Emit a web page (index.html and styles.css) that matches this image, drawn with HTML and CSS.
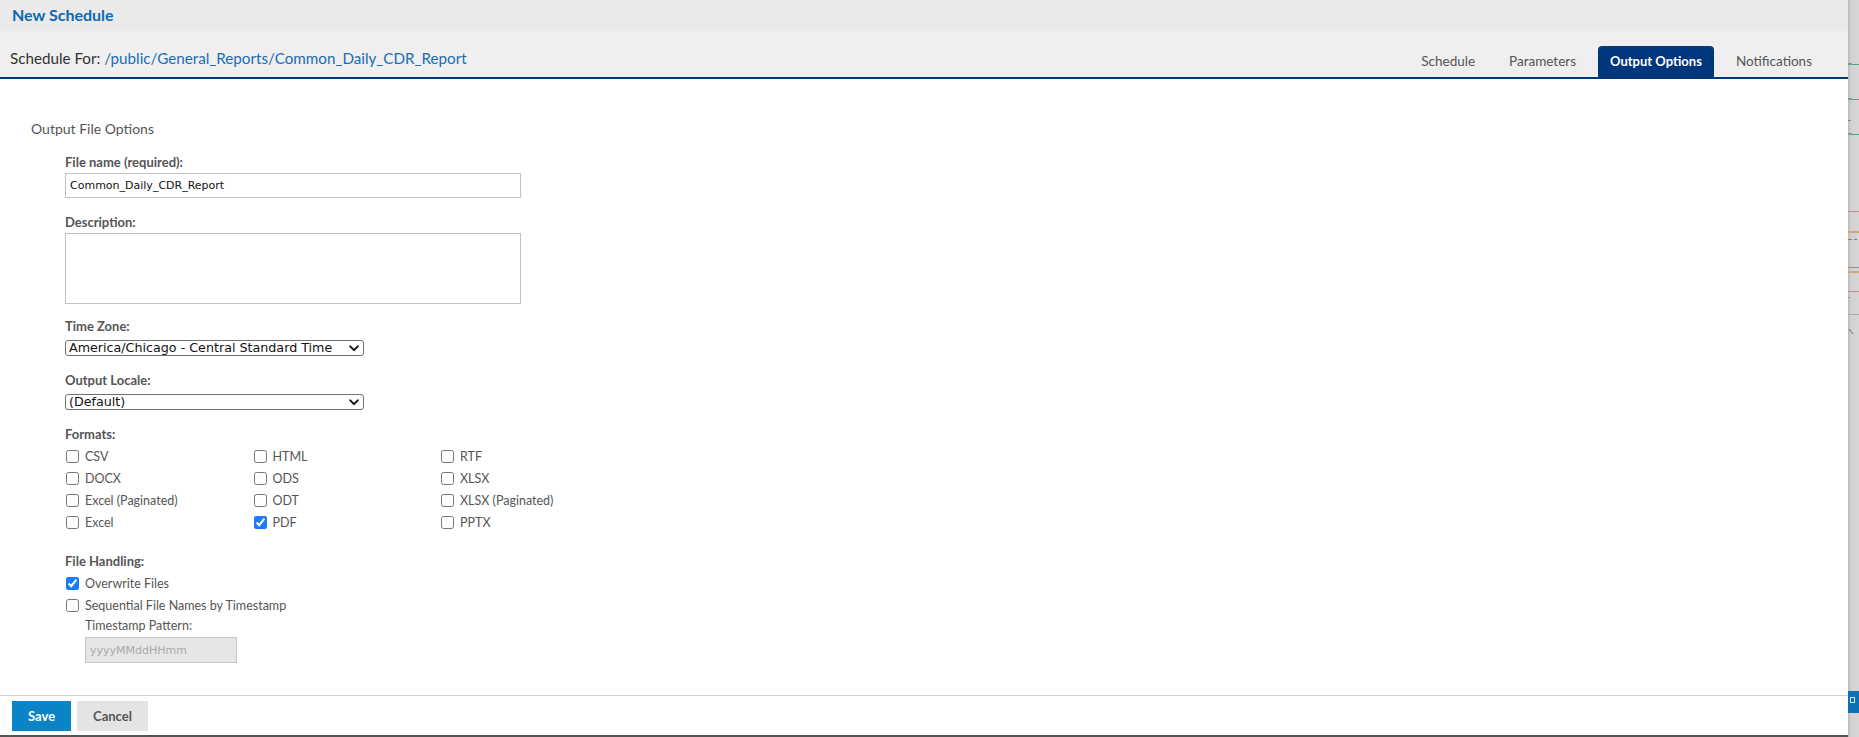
FILE: index.html
```html
<!DOCTYPE html>
<html lang="en">
<head>
  <meta charset="UTF-8">
  <title>New Schedule</title>
  <meta name="viewport" content="width=device-width, initial-scale=1.0">
  <link rel="stylesheet" href="styles.css">
</head>
<body>
  <div class="screen">
    <div class="dialog">
      <div class="title-bar">New Schedule</div>

      <div class="sub-header">
        <div class="schedule-for">Schedule For: <a class="report-path" href="#">/public/General_Reports/Common_Daily_CDR_Report</a></div>
        <ul class="tabs">
          <li class="tab">Schedule</li>
          <li class="tab">Parameters</li>
          <li class="tab active">Output Options</li>
          <li class="tab">Notifications</li>
        </ul>
      </div>

      <div class="content">
        <h2 class="section-title">Output File Options</h2>
        <div class="form">
          <div class="field field-name">
            <label class="field-label" for="fileName">File name (required):</label>
            <input class="text-input" id="fileName" type="text" value="Common_Daily_CDR_Report">
          </div>

          <div class="field field-desc">
            <label class="field-label" for="description">Description:</label>
            <textarea class="text-area" id="description"></textarea>
          </div>

          <div class="field field-select">
            <label class="field-label" for="timeZone">Time Zone:</label>
            <div class="select">
              <select id="timeZone">
                <option>America/Chicago - Central Standard Time</option>
              </select>
              <svg class="chevron" width="10" height="7" viewBox="0 0 10 7"><path d="M1.2 1.3 5 5.2 8.8 1.3" fill="none" stroke="#111" stroke-width="1.9" stroke-linecap="round" stroke-linejoin="round"/></svg>
            </div>
          </div>

          <div class="field field-select">
            <label class="field-label" for="locale">Output Locale:</label>
            <div class="select">
              <select id="locale">
                <option>(Default)</option>
              </select>
              <svg class="chevron" width="10" height="7" viewBox="0 0 10 7"><path d="M1.2 1.3 5 5.2 8.8 1.3" fill="none" stroke="#111" stroke-width="1.9" stroke-linecap="round" stroke-linejoin="round"/></svg>
            </div>
          </div>

          <div class="field field-formats">
            <div class="field-label">Formats:</div>
            <div class="formats">
              <label class="option"><input type="checkbox"> CSV</label>
              <label class="option"><input type="checkbox"> HTML</label>
              <label class="option"><input type="checkbox"> RTF</label>
              <label class="option"><input type="checkbox"> DOCX</label>
              <label class="option"><input type="checkbox"> ODS</label>
              <label class="option"><input type="checkbox"> XLSX</label>
              <label class="option"><input type="checkbox"> Excel (Paginated)</label>
              <label class="option"><input type="checkbox"> ODT</label>
              <label class="option"><input type="checkbox"> XLSX (Paginated)</label>
              <label class="option"><input type="checkbox"> Excel</label>
              <label class="option"><input type="checkbox" checked> PDF</label>
              <label class="option"><input type="checkbox"> PPTX</label>
            </div>
          </div>

          <div class="field">
            <div class="field-label">File Handling:</div>
            <label class="option"><input type="checkbox" checked> Overwrite Files</label>
            <label class="option"><input type="checkbox"> Sequential File Names by Timestamp</label>
            <div class="timestamp">
              <label class="sub-label" for="pattern">Timestamp Pattern:</label>
              <input class="text-input pattern" id="pattern" type="text" placeholder="yyyyMMddHHmm" disabled>
            </div>
          </div>
        </div>
      </div>

      <div class="footer">
        <button class="btn btn-primary">Save</button>
        <button class="btn btn-secondary">Cancel</button>
      </div>
    </div>

    <!-- the page behind the dialog, peeking out on the right -->
    <div class="backdrop">
      <svg width="11" height="737" viewBox="0 0 11 737">
        <rect x="0" y="63" width="4" height="2" fill="#8893b2"/>
        <rect x="4" y="64" width="7" height="1" fill="#4fa57a"/>
        <rect x="0" y="98" width="4" height="2" fill="#8893b2"/>
        <rect x="4" y="99" width="7" height="1" fill="#4fa57a"/>
        <rect x="0" y="120" width="3" height="1" fill="#7c86a8"/>
        <rect x="0" y="133" width="4" height="2" fill="#8893b2"/>
        <rect x="4" y="134" width="7" height="1" fill="#4fa57a"/>
        <rect x="0" y="211" width="11" height="1" fill="#c48a8a"/>
        <rect x="0" y="231" width="11" height="2" fill="#d2a878"/>
        <rect x="0" y="239" width="4" height="1" fill="#c46464"/>
        <rect x="6" y="239" width="3" height="1" fill="#5a78d6"/>
        <rect x="0" y="267" width="11" height="1" fill="#8a92aa"/>
        <rect x="0" y="271" width="11" height="2" fill="#d2a878"/>
        <rect x="0" y="291" width="11" height="1" fill="#c48a8a"/>
        <rect x="0" y="297" width="2" height="1" fill="#999"/>
        <rect x="0" y="314" width="11" height="1" fill="#a8a8a8"/>
        <path d="M1 329 5 334" stroke="#666" stroke-width="1"/>
        <rect x="0" y="691" width="11" height="22" fill="#0a72b5"/>
        <rect x="2.5" y="697.5" width="4" height="5" fill="none" stroke="#cfe3f2" stroke-width="1"/>
      </svg>
    </div>
  </div>
</body>
</html>
```

FILE: styles.css
```css
html, body {
  margin: 0;
  padding: 0;
}

body {
  font-family: Lato, 'Open Sans', sans-serif;
  color: #555;
  background-color: #d4d4d4;
}

.screen {
  display: flex;
  height: 100vh;
}

.dialog {
  width: 1848px;
  display: flex;
  flex-direction: column;
  background-color: #fff;
}

.title-bar {
  height: 31px;
  line-height: 29px;
  padding-left: 12px;
  background-color: #eaeaea;
  color: #0d68b4;
  font-size: 16px;
  font-weight: bold;
}

.sub-header {
  height: 46px;
  display: flex;
  justify-content: space-between;
  align-items: flex-end;
  background-color: #efefef;
  border-bottom: 2px solid #00367c;
}

.schedule-for {
  padding: 0 0 9px 10px;
  line-height: 20px;
  font-size: 15.2px;
  color: #333;
}

.report-path {
  color: #1a6db6;
  text-decoration: none;
}

.tabs {
  display: flex;
  gap: 10px;
  margin: 0 24px 0 0;
  padding: 0;
  list-style: none;
}

.tab {
  height: 31px;
  line-height: 31px;
  padding: 0 12px;
  font-size: 13.5px;
  color: #555;
}

.tab.active {
  background-color: #00367c;
  color: #fff;
  font-size: 13px;
  font-weight: bold;
  border-radius: 4px 4px 0 0;
}

.content {
  flex: 1;
  padding: 41px 0 0 31px;
}

.section-title {
  margin: 0;
  font-size: 14px;
  line-height: 18px;
  font-weight: normal;
  color: #555;
}

.form {
  margin: 16px 0 0 34px;
}

.field {
  margin-bottom: 18px;
}

.field-name {
  margin-bottom: 16px;
}

.field-desc {
  margin-bottom: 14px;
}

.field-select {
  margin-bottom: 16px;
}

.field-formats {
  margin-bottom: 20px;
}

.field-label {
  display: block;
  margin-bottom: 3px;
  font-size: 13px;
  line-height: 16px;
  font-weight: bold;
  color: #555;
}

.text-input,
.text-area,
.select select {
  font-family: 'DejaVu Sans', sans-serif;
  font-size: 11px;
  color: #111;
}

.text-input {
  display: block;
  box-sizing: border-box;
  width: 456px;
  height: 25px;
  margin: 0;
  padding: 0 4px;
  border: 1px solid #c2c2c2;
  background-color: #fff;
  outline: none;
}

.text-area {
  display: block;
  box-sizing: border-box;
  width: 456px;
  height: 71px;
  margin: 3px 0 0;
  padding: 3px 4px;
  border: 1px solid #c2c2c2;
  resize: none;
}

.select {
  position: relative;
  width: 299px;
  margin-top: 6px;
}

.select select {
  display: block;
  box-sizing: border-box;
  width: 100%;
  height: 16px;
  margin: 0;
  padding: 0 18px 0 3px;
  font-size: 12.7px;
  line-height: 14px;
  border: 1px solid #707070;
  border-radius: 3px;
  background-color: #fff;
  -webkit-appearance: none;
  appearance: none;
}

.chevron {
  position: absolute;
  right: 5px;
  top: 5px;
  pointer-events: none;
}

.formats {
  display: grid;
  grid-template-columns: repeat(3, 187.5px);
}

.option {
  display: flex;
  align-items: center;
  gap: 6px;
  height: 22px;
  padding-left: 1px;
  font-size: 12.5px;
  color: #555;
}

.option input {
  width: 13px;
  height: 13px;
  margin: 0;
  accent-color: #1a7cf6;
}

.timestamp {
  padding: 2px 0 0 20px;
}

.sub-label {
  display: block;
  font-size: 12.5px;
  line-height: 16px;
  color: #555;
}

.text-input.pattern {
  width: 152px;
  height: 26px;
  margin-top: 3px;
  background-color: #e6e6e6;
  border-color: #c6c6c6;
}

.text-input.pattern::placeholder {
  color: #a9a9a9;
}

.footer {
  display: flex;
  gap: 6px;
  padding: 5px 0 4px 12px;
  border-top: 1px solid #d2d2d2;
  border-bottom: 2px solid #555;
}

.btn {
  height: 30px;
  padding: 0 16px;
  border: none;
  border-radius: 0;
  font-family: Lato, sans-serif;
  font-size: 13px;
  font-weight: bold;
}

.btn-primary {
  background-color: #0a83c7;
  color: #fff;
}

.btn-secondary {
  padding: 0 16px;
  background-color: #e4e4e4;
  color: #555;
}

.backdrop {
  flex: 1;
  background: linear-gradient(to right, #b9b9b9, #d2d2d2 3px, #d6d6d6);
}

.backdrop svg {
  display: block;
}
```
